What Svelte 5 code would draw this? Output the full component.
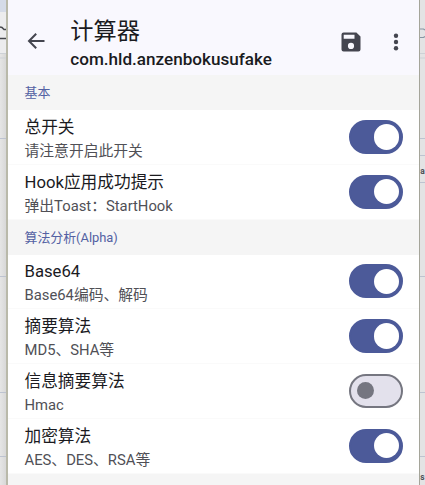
<script lang="ts">
  interface Option {
    title: string
    summary: string
    enabled: boolean
  }

  interface Section {
    name: string
    options: Option[]
  }

  let sections = $state<Section[]>([
    {
      name: '基本',
      options: [
        { title: '总开关', summary: '请注意开启此开关', enabled: true },
        { title: 'Hook应用成功提示', summary: '弹出Toast：StartHook', enabled: true },
      ],
    },
    {
      name: '算法分析(Alpha)',
      options: [
        { title: 'Base64', summary: 'Base64编码、解码', enabled: true },
        { title: '摘要算法', summary: 'MD5、SHA等', enabled: true },
        { title: '信息摘要算法', summary: 'Hmac', enabled: false },
        { title: '加密算法', summary: 'AES、DES、RSA等', enabled: true },
      ],
    },
  ])
</script>

<div class="desktop">
  <div class="behind left">
    <svg width="6" height="485" viewBox="0 0 6 485" aria-hidden="true">
      <rect width="6" height="12" fill="#d5dbe8" />
      <rect y="12" width="6" height="42" fill="#ececee" />
      <path d="M0 27 L2 27.5 L4 29.5 L6 29.5" fill="none" stroke="#45474c" stroke-width="1.5" />
      <path d="M0 38.5 H6" stroke="#45474c" stroke-width="1.5" />
      <path d="M0 53.5 H6 M0 58 H6" stroke="#cdd1d6" />
      <path d="M0 138.5 H6 M0 276.5 H6 M0 392.5 H6 M0 456.5 H6" stroke="#bdc3d0" />
    </svg>
  </div>

  <main class="window">
    <header>
      <button class="back" aria-label="返回">
        <svg width="24" height="24" viewBox="0 0 24 24">
          <path d="M20.5 12 H4.8 M12.2 4.7 L5 12 L12.2 19.3" fill="none" stroke="#44454f" stroke-width="2" />
        </svg>
      </button>
      <div class="heading">
        <h1>计算器</h1>
        <p>com.hld.anzenbokusufake</p>
      </div>
      <button class="save" aria-label="保存">
        <svg width="20" height="20" viewBox="0 0 20 20">
          <path fill="#44454f" fill-rule="evenodd" d="M2.6 0.5 H15.4 L19.5 4.6 V17.4 Q19.5 19.5 17.4 19.5 H2.6 Q0.5 19.5 0.5 17.4 V2.6 Q0.5 0.5 2.6 0.5 Z M2.7 2.7 V6.8 H13.5 V2.7 Z M10 10.8 A3.1 3.1 0 1 0 10 17 A3.1 3.1 0 1 0 10 10.8 Z" />
        </svg>
      </button>
      <button class="more" aria-label="更多">
        <svg width="6" height="18" viewBox="0 0 6 18">
          <circle cx="3" cy="2.7" r="2.2" />
          <circle cx="3" cy="9" r="2.2" />
          <circle cx="3" cy="15.3" r="2.2" />
        </svg>
      </button>
    </header>

    {#each sections as section}
      <h2>{section.name}</h2>
      {#each section.options as option}
        <div class="option">
          <div class="text">
            <div class="title">{option.title}</div>
            <div class="summary">{option.summary}</div>
          </div>
          <button
            class="switch"
            class:on={option.enabled}
            role="switch"
            aria-checked={option.enabled}
            aria-label={option.title}
            onclick={() => { option.enabled = !option.enabled }}
          >
            <span class="thumb"></span>
          </button>
        </div>
      {/each}
    {/each}
    <div class="next-section"></div>
  </main>

  <div class="behind">
    <svg width="5" height="485" viewBox="0 0 5 485" aria-hidden="true">
      <path d="M0 29 H3.5 L5 30 M0 37.5 H3.5 L5 36.5" fill="none" stroke="#8795a2" stroke-width="1.2" />
      <path d="M0 53.5 H5 M0 58 H5" stroke="#cdd1d6" />
      <path d="M0 138.5 H5 M0 155.5 H5 M0 182.5 H5 M0 276.5 H5 M0 392.5 H5 M0 456.5 H5" stroke="#bdc3d0" />
      <text x="0.2" y="173.5">a</text>
      <text x="0.2" y="479.5">s</text>
    </svg>
  </div>
</div>

<style>
  :global(body) {
    background: #e6e6e6;
    overflow: hidden;
  }

  .desktop {
    display: grid;
    grid-template-columns: 6px 1fr 5px;
    height: 485px;
    font-family: Roboto, "Noto Sans CJK SC", sans-serif;
    overflow: hidden;
  }

  .behind {
    background: #e3e3e4;
    overflow: hidden;
  }

  .left {
    background: linear-gradient(to right, #e5e5e5, #d8d8d8);
  }

  .behind svg {
    display: block;
  }

  .behind text {
    font-size: 8.4px;
    font-weight: 700;
    fill: #4c4f55;
  }

  .window {
    display: flex;
    flex-direction: column;
    min-width: 0;
    box-sizing: border-box;
    border-left: 2px solid #b9b9aa;
    border-right: 1px solid #a5a59a;
    background: #fff;
    overflow: hidden;
  }

  button {
    display: block;
    padding: 0;
    border: none;
    background: none;
    cursor: pointer;
  }

  header {
    display: flex;
    flex: none;
    align-items: flex-start;
    box-sizing: border-box;
    height: 75px;
    padding-left: 16px;
    padding-right: 20px;
    background: #f9f8fe;
  }

  header svg {
    display: block;
  }

  .back {
    margin-top: 29px;
  }

  .heading {
    flex: 1;
    margin: 15px 0 0 22.3px;
  }

  h1 {
    margin: 0;
    font-size: 23.2px;
    line-height: 32px;
    font-weight: 400;
    color: #1a1b21;
  }

  .heading p {
    margin: 0;
    font-size: 17.1px;
    line-height: 24px;
    font-weight: 500;
    color: #1a1b21;
  }

  .save {
    margin: 32px 32px 0 0;
  }

  .more {
    margin-top: 33px;
    fill: #44454f;
  }

  h2 {
    flex: none;
    box-sizing: border-box;
    height: 35px;
    margin: 0;
    padding-left: 16.5px;
    background: #f5f5f5;
    font-size: 12.9px;
    line-height: 35px;
    font-weight: 400;
    color: #5361a3;
  }

  .option {
    display: flex;
    flex: none;
    align-items: center;
    justify-content: space-between;
    box-sizing: border-box;
    height: 54.75px;
    padding: 0 16px 0 16.5px;
    border-bottom: 1px solid #fafafa;
  }

  .text {
    padding-top: 5px;
  }

  .title {
    font-size: 16.7px;
    line-height: 24px;
    color: #1b1b1f;
  }

  .summary {
    font-size: 14.8px;
    line-height: 23px;
    color: #505056;
  }

  .switch {
    display: flex;
    align-items: center;
    box-sizing: border-box;
    width: 54.5px;
    height: 34px;
    padding-left: 6.5px;
    border: 2px solid #757680;
    border-radius: 17px;
    background: #e3e1ec;
  }

  .thumb {
    width: 17px;
    height: 17px;
    border-radius: 50%;
    background: #757680;
  }

  .switch.on {
    padding-left: 23px;
    border-color: #4c5a99;
    background: #4c5a99;
  }

  .switch.on .thumb {
    width: 25.5px;
    height: 25.5px;
    background: #fff;
  }

  .next-section {
    flex: 1;
    background: #f5f5f5;
  }
</style>
